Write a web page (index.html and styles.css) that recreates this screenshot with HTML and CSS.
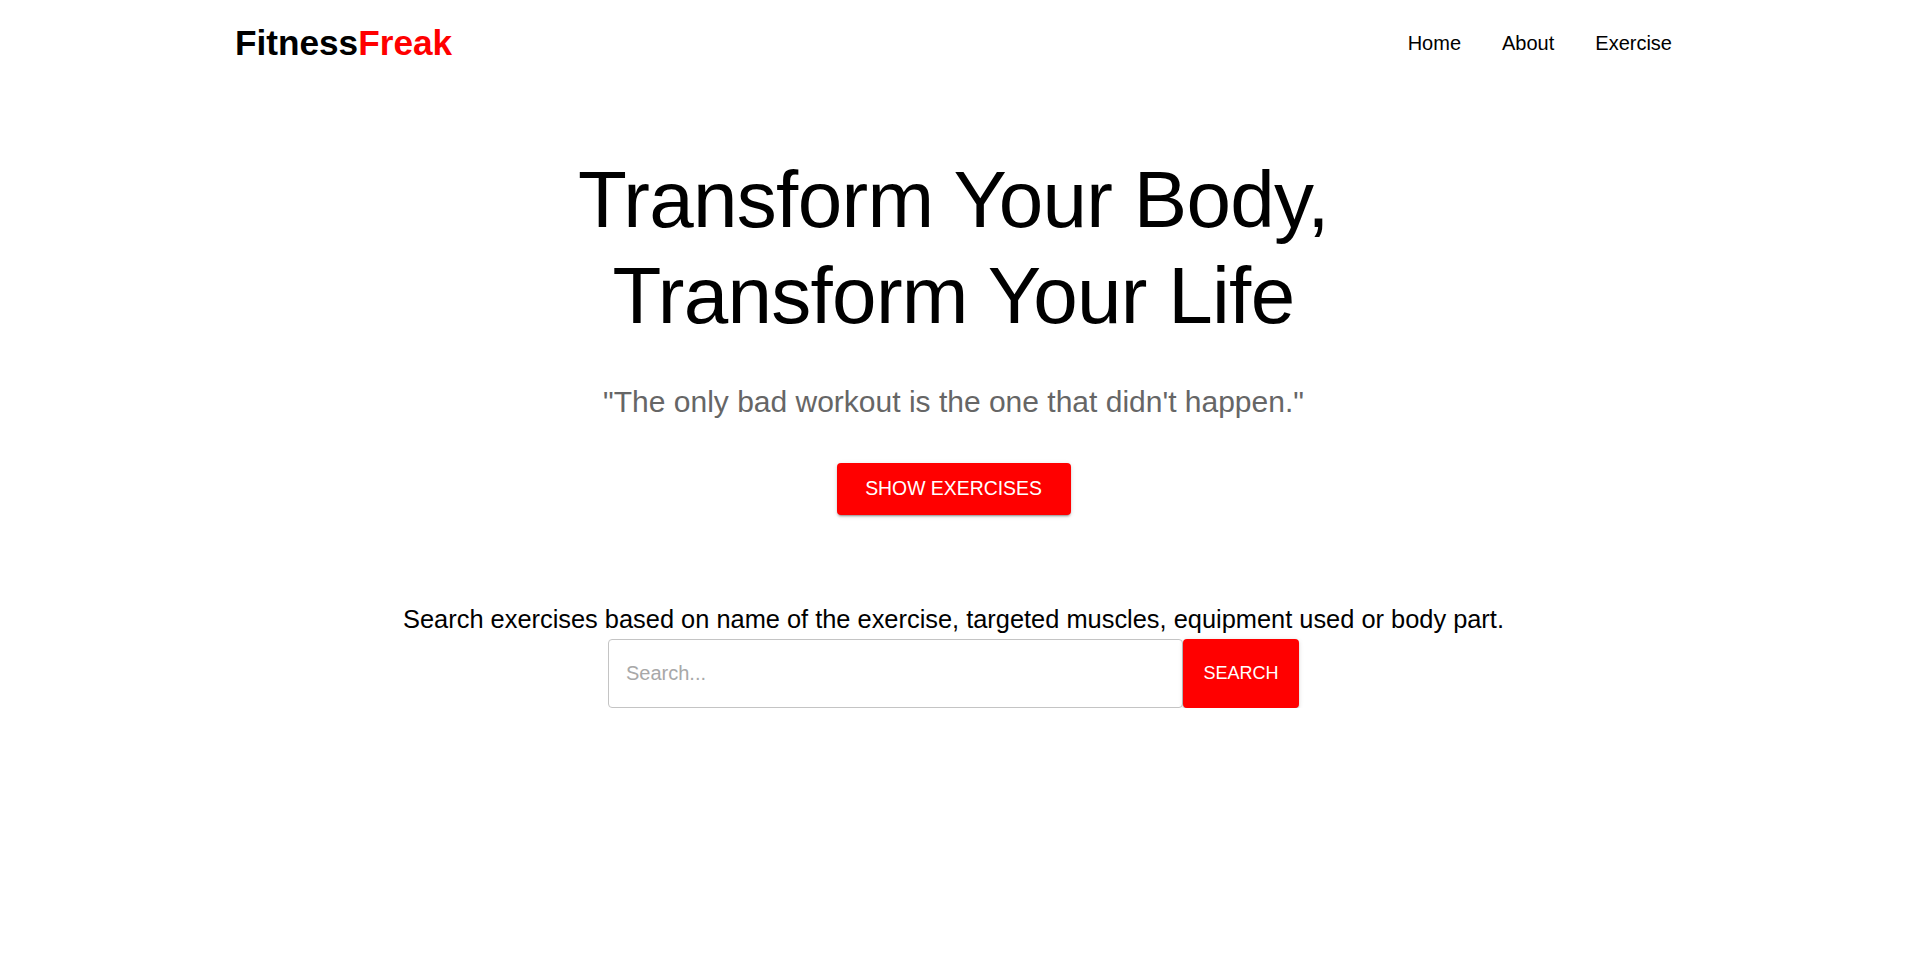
FILE: index.html
```html
<!DOCTYPE html>
<html lang="en">
<head>
<meta charset="utf-8">
<title>FitnessFreak</title>
<link rel="stylesheet" href="styles.css">
</head>
<body>
<header class="navbar">
  <div class="logo">Fitness<span class="logo-accent">Freak</span></div>
  <nav class="nav-links">
    <a href="#" class="nav-link">Home</a>
    <a href="#" class="nav-link">About</a>
    <a href="#" class="nav-link">Exercise</a>
  </nav>
</header>
<main class="hero">
  <h1 class="hero-title">Transform Your Body,<br>Transform Your Life</h1>
  <p class="hero-quote">"The only bad workout is the one that didn't happen."</p>
  <button class="btn btn-show">SHOW EXERCISES</button>
  <p class="search-text">Search exercises based on name of the exercise, targeted muscles, equipment used or body part.</p>
  <div class="search-row">
    <input class="search-input" type="text" placeholder="Search...">
    <button class="btn btn-search">SEARCH</button>
  </div>
</main>
</body>
</html>
```
FILE: styles.css
```css
* { box-sizing: border-box; }
html, body {
  margin: 0;
  padding: 0;
  background: #ffffff;
  font-family: "Liberation Sans", Arial, sans-serif;
  color: #000;
}
.navbar {
  height: 86px;
  padding: 0 235px;
  display: flex;
  align-items: center;
  justify-content: space-between;
}
.logo {
  font-size: 35.2px;
  font-weight: 700;
  color: #000;
}
.logo-accent { color: #ff0000; }
.nav-links {
  display: flex;
  gap: 41px;
}
.nav-link {
  font-size: 20px;
  color: #000;
  text-decoration: none;
}
.hero {
  display: flex;
  flex-direction: column;
  align-items: center;
  text-align: center;
}
.hero-title {
  margin: 66px 0 0;
  font-size: 80px;
  font-weight: 400;
  line-height: 96px;
  letter-spacing: -0.7px;
}
.hero-quote {
  margin: 41px 0 0;
  font-size: 30px;
  line-height: 34.5px;
  color: #666666;
}
.btn {
  border: none;
  background: #ff0000;
  color: #ffffff;
  font-family: "Liberation Sans", Arial, sans-serif;
  border-radius: 4px;
  cursor: pointer;
  box-shadow: 0px 3px 1px -2px rgba(0,0,0,0.2), 0px 2px 2px 0px rgba(0,0,0,0.14), 0px 1px 5px 0px rgba(0,0,0,0.12);
}
.btn-show {
  margin-top: 43px;
  width: 234px;
  height: 52px;
  font-size: 19.4px;
}
.search-text {
  margin: 90px 0 0;
  font-size: 25.4px;
  line-height: 29px;
}
.search-row {
  margin-top: 5px;
  display: flex;
  align-items: stretch;
}
.search-input {
  width: 575px;
  height: 69px;
  border: 1px solid #c4c4c4;
  border-radius: 4px;
  padding: 0 17px;
  font-family: "Liberation Sans", Arial, sans-serif;
  font-size: 20px;
  color: #000;
  outline: none;
}
.search-input::placeholder { color: #a8a8a8; }
.btn-search {
  width: 116px;
  height: 69px;
  font-size: 18px;
}
```
